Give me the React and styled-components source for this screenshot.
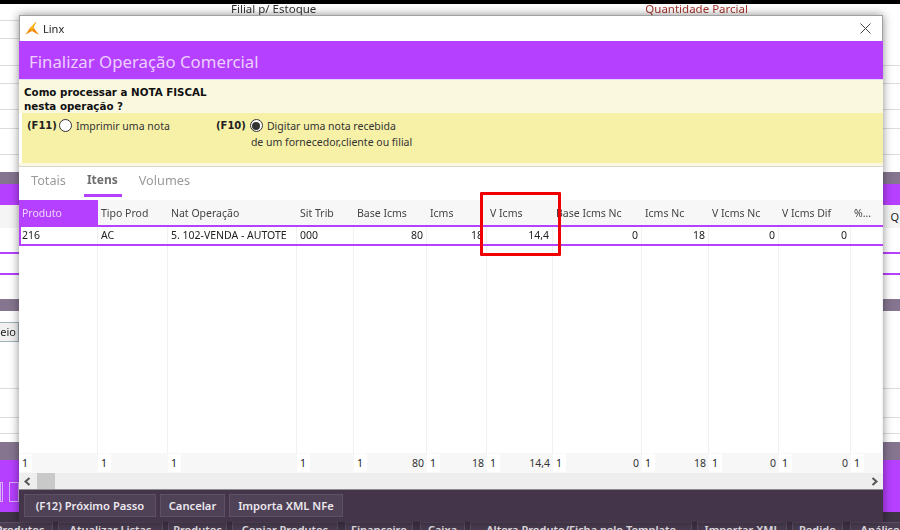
import styled, { createGlobalStyle } from "styled-components"

const GlobalStyle = createGlobalStyle`
    html, body {
        margin: 0;
        padding: 0;
        background: #fff;
    }
    body {
        width: 900px;
        height: 530px;
        overflow: hidden;
        font-family: "Noto Sans", "Liberation Sans", sans-serif;
    }
`

const PURPLE = "#b640ff"
const COLUMNS = "79px 70px 129px 57px 73px 60px 66px 89px 67px 70px 72px 1fr"

const Page = styled.div`
    position: relative;
    width: 900px;
    height: 530px;
    overflow: hidden;
    filter: blur(0.35px);
`

const Backdrop = styled.div`
    display: flex;
    flex-direction: column;
    height: 530px;
`

const BlackBar = styled.div`
    height: 4px;
    flex: none;
    background: #000;
`

const TopLabels = styled.div`
    height: 16px;
    flex: none;
    display: flex;
    font-size: 11.5px;
    line-height: 9px;
    overflow: hidden;
`

const TopLabel = styled.span`
    margin-left: ${(p) => p.$left}px;
    color: ${(p) => p.$color || "#333"};
`

const FormRow = styled.div`
    height: ${(p) => p.$h}px;
    flex: none;
    box-sizing: border-box;
    border-top: 1px solid #dcdcdc;
`

const ShortRow = styled(FormRow)`
    width: 20px;
`

const BlankRow = styled.div`
    height: ${(p) => p.$h}px;
    flex: none;
`

const GrayBand = styled.div`
    height: ${(p) => p.$h}px;
    flex: none;
    background: #85758f;
`

const PurpleBand = styled.div`
    height: ${(p) => p.$h}px;
    flex: none;
    background: ${PURPLE};
    display: flex;
    gap: 6px;
    padding-top: ${(p) => p.$pad || 0}px;
    box-sizing: border-box;
`

const GhostButton = styled.div`
    width: ${(p) => p.$w}px;
    height: 20px;
    flex: none;
    border: 1px solid #d8b0f5;
    box-sizing: border-box;
`

const LightRow = styled.div`
    height: 23px;
    flex: none;
    background: #f5f5f5;
    display: flex;
    justify-content: flex-end;
    align-items: center;
    padding-right: 1px;
    font-size: 11px;
    color: #222;
`

const PurpleLine = styled.div`
    height: ${(p) => p.$h}px;
    flex: none;
    box-sizing: border-box;
    border-top: 2px solid ${PURPLE};
`

const FieldRow = styled.div`
    height: 77px;
    flex: none;
    padding-top: 11px;
    box-sizing: border-box;
`

const Field = styled.div`
    width: 19px;
    height: 20px;
    box-sizing: border-box;
    border: 1px solid #9fb0bb;
    border-left: none;
    background: #f1f1f1;
    font-size: 11px;
    line-height: 18px;
    color: #222;
    text-align: right;
    padding-right: 2px;
    overflow: hidden;
`

const BottomTabs = styled.div`
    flex: 1;
    min-height: 0;
    background: #3f3346;
    display: flex;
    align-items: flex-start;
    padding-top: 10px;
    overflow: hidden;
`

const BottomTab = styled.div`
    flex: none;
    width: ${(p) => p.$w}px;
    margin-left: ${(p) => p.$left}px;
    box-sizing: border-box;
    text-align: center;
    font-size: 11px;
    font-weight: 600;
    line-height: 14px;
    white-space: nowrap;
    color: #e6e2e8;
    background: #4a3d51;
    border: 1px solid #5b4e62;
`

const Modal = styled.div`
    position: absolute;
    left: 19px;
    top: 15px;
    width: 864px;
    height: 507px;
    display: flex;
    flex-direction: column;
    background: #fff;
    box-shadow: 0 0 9px rgba(0, 0, 0, 0.45);
`

const TitleBar = styled.div`
    height: 26px;
    flex: none;
    box-sizing: border-box;
    border: 1px solid #a0a0a0;
    border-bottom: none;
    display: flex;
    align-items: center;
    padding: 0 11px 0 5px;
    gap: 3px;
    font-size: 11px;
    color: #222;
`

const WindowName = styled.span`
    flex: 1;
`

const HeaderBand = styled.div`
    height: 39px;
    flex: none;
    background: ${PURPLE};
    border-bottom: 1px solid #e8d8f4;
    display: flex;
    align-items: center;
    padding: 3px 0 0 10px;
    box-sizing: border-box;
    font-size: 16.8px;
    color: #eccfff;
`

const Question = styled.div`
    flex: none;
    height: 33px;
    box-sizing: border-box;
    background: #fbf8e0;
    padding: 5px 0 0 5px;
    font-family: "DejaVu Sans", sans-serif;
    font-size: 10.3px;
    line-height: 14px;
    font-weight: 700;
    color: #111;
`

const Options = styled.div`
    height: 50px;
    flex: none;
    background: #f7f1a8;
    margin-left: 3px;
    display: flex;
    padding-top: 5px;
    box-sizing: border-box;
    font-size: 10.5px;
    color: #333;
`

const Option = styled.div`
    width: ${(p) => p.$w}px;
    flex: none;
    display: flex;
    align-items: flex-start;
    padding-left: ${(p) => p.$pad}px;
    box-sizing: border-box;
`

const Shortcut = styled.span`
    font-family: "DejaVu Sans", sans-serif;
    font-size: 10px;
    font-weight: 700;
    color: #222;
    line-height: 15px;
`

const Radio = styled.span`
    width: 13px;
    height: 13px;
    flex: none;
    margin: 1px 4px 0 ${(p) => p.$gap}px;
    box-sizing: border-box;
    border-radius: 50%;
    border: 1px solid #333;
    background: #fff;
    display: flex;
    align-items: center;
    justify-content: center;

    &::after {
        content: "";
        width: 8px;
        height: 8px;
        border-radius: 50%;
        background: ${(p) => (p.$checked ? "#333" : "transparent")};
    }
`

const OptionText = styled.span`
    line-height: 16px;
`

const Indent = styled.span`
    display: block;
    margin-left: -16px;
`

const QuestionEnd = styled.div`
    height: 4px;
    flex: none;
    box-sizing: border-box;
    background: #fbf8e0;
    border-bottom: 1px solid #d6d6d6;
`

const Tabs = styled.div`
    height: 33px;
    flex: none;
    display: flex;
    gap: 21px;
    padding: 4px 0 0 12px;
    box-sizing: border-box;
    font-size: 12.7px;
    line-height: 18px;
    color: #9a9a9a;
`

const Tab = styled.div`
    position: relative;
    font-size: ${(p) => (p.$active ? "12px" : "12.7px")};
    font-weight: ${(p) => (p.$active ? 700 : 400)};
    color: ${(p) => (p.$active ? "#6e6e6e" : "#9a9a9a")};

    ${(p) =>
        p.$active &&
        `&::after {
            content: "";
            position: absolute;
            left: -3px;
            right: -4px;
            top: 23px;
            height: 3px;
            background: ${PURPLE};
        }`}
`

const GridRow = styled.div`
    display: grid;
    grid-template-columns: ${COLUMNS};
    flex: none;
`

const HeadRow = styled(GridRow)`
    height: 25px;
    background: #f7f7f7;
    font-size: 10.5px;
    color: #444;
`

const HeadCell = styled.div`
    display: flex;
    align-items: center;
    padding-left: 3px;
    white-space: nowrap;
    overflow: hidden;
    background: ${(p) => (p.$active ? PURPLE : "transparent")};
    color: ${(p) => (p.$active ? "#ecd6ff" : "#444")};
`

const SelectedRow = styled(GridRow)`
    height: 21px;
    box-sizing: border-box;
    border-top: 2px solid ${PURPLE};
    border-bottom: 2px solid ${PURPLE};
    box-shadow: inset 2px 0 0 ${PURPLE};
    font-size: 10.5px;
    color: #222;
`

const DataCell = styled.div`
    display: flex;
    align-items: center;
    justify-content: ${(p) => (p.$right ? "flex-end" : "flex-start")};
    padding: ${(p) => (p.$right ? "0 3px 1px 0" : "0 0 1px 3px")};
    border-right: 1px solid #f1f1f1;
    white-space: nowrap;
    overflow: hidden;
`

const EmptyRows = styled(GridRow)`
    flex: 1;
    min-height: 0;
`

const EmptyCell = styled.div`
    border-right: 1px solid #f1f1f1;
`

const TotalsRow = styled(GridRow)`
    height: 20px;
    background: #f7f7f7;
    font-size: 10.5px;
    color: #333;
`

const TotalCell = styled.div`
    display: flex;
    justify-content: space-between;
    align-items: center;
    padding-right: 3px;
    min-width: 0;
`

const CountChip = styled.span`
    background: #fff;
    padding: 2px 4px 2px 3px;
    line-height: 14px;
    color: #222;
`

const ScrollBar = styled.div`
    height: 17px;
    flex: none;
    box-sizing: border-box;
    background: #eeeeee;
    border-bottom: 1px solid #8c8c8c;
    display: flex;
    align-items: stretch;
    justify-content: space-between;
`

const ScrollLeft = styled.div`
    display: flex;
    align-items: center;
    gap: 6px;
    padding-left: 5px;
`

const Thumb = styled.div`
    width: 18px;
    align-self: stretch;
    background: #c9c9c9;
`

const ScrollRight = styled.div`
    display: flex;
    align-items: center;
    padding-right: 5px;
`

const Footer = styled.div`
    height: 32px;
    flex: none;
    box-sizing: border-box;
    background: #44354a;
    display: flex;
    gap: 4px;
    padding: 4px 0 0 5px;
    align-items: flex-start;
`

const FooterButton = styled.button`
    height: 23px;
    width: ${(p) => p.$w}px;
    padding: 0;
    background: #4f4257;
    border: 1px solid #5e5166;
    font-family: inherit;
    font-size: 11.2px;
    font-weight: 600;
    color: #ece8ee;
`

const Highlight = styled.div`
    position: absolute;
    left: 480px;
    top: 192px;
    width: 81px;
    height: 64px;
    box-sizing: border-box;
    border: 3px solid #f00000;
    border-radius: 1px;
`

const LinxLogo = () => (
    <svg width="15" height="15" viewBox="0 0 15 15">
        <path d="M11.5 0.5 L8.5 6.5 L14 14 L7 10 L0.5 13.5 L5 7 Z" fill="#f58a0b" />
        <path d="M11.5 0.5 L8.5 6.5 L7 10 L5 7 Z" fill="#f9b81f" />
    </svg>
)

const CloseIcon = () => (
    <svg width="11" height="11" viewBox="0 0 11 11">
        <path d="M0.5 0.5 L10.5 10.5 M10.5 0.5 L0.5 10.5" stroke="#444" strokeWidth="1" fill="none" />
    </svg>
)

const Chevron = ({ dir }) => (
    <svg width="7" height="9" viewBox="0 0 7 9">
        <path
            d={dir === "left" ? "M5.5 1 L1.5 4.5 L5.5 8" : "M1.5 1 L5.5 4.5 L1.5 8"}
            stroke="#555"
            strokeWidth="2"
            fill="none"
        />
    </svg>
)

const headers = [
    "Produto",
    "Tipo Prod",
    "Nat Operação",
    "Sit Trib",
    "Base Icms",
    "Icms",
    "V Icms",
    "Base Icms Nc",
    "Icms Nc",
    "V Icms Nc",
    "V Icms Dif",
    "%...",
]

const rowCells = [
    { text: "216" },
    { text: "AC" },
    { text: "5. 102-VENDA - AUTOTE" },
    { text: "000" },
    { text: "80", right: true },
    { text: "18", right: true },
    { text: "14,4", right: true },
    { text: "0", right: true },
    { text: "18", right: true },
    { text: "0", right: true },
    { text: "0", right: true },
    { text: "" },
]

const totals = ["", "", "", "", "80", "18", "14,4", "0", "18", "0", "0", ""]

// width and gap before each tab of the strip under the dialog
const tabs = [
    ["Produtos", 66, -13],
    ["Atualizar Listas", 105, 5],
    ["Produtos", 59, 5],
    ["Copiar Produtos", 106, 5],
    ["Financeiro", 68, 7],
    ["Caixa", 45, 7],
    ["Altera Produto/Ficha pelo Template", 222, 5],
    ["Importar XML", 90, 5],
    ["Pedido", 51, 5],
    ["Análise", 60, 7],
]

export default function App() {
    return (
        <Page>
            <GlobalStyle />
            <Backdrop>
                <BlackBar />
                <TopLabels>
                    <TopLabel $left={231}>Filial p/ Estoque</TopLabel>
                    <TopLabel $left={329} $color="#a5342c">
                        Quantidade Parcial
                    </TopLabel>
                </TopLabels>
                <ShortRow $h={18} />
                <ShortRow $h={27} />
                <FormRow $h={18} />
                <FormRow $h={26} />
                <FormRow $h={19} />
                <FormRow $h={26} />
                <FormRow $h={18} />
                <GrayBand $h={12} />
                <PurpleBand $h={21} />
                <LightRow>Q</LightRow>
                <BlankRow $h={24} />
                <PurpleLine $h={21} />
                <PurpleLine $h={26} />
                <GrayBand $h={12} />
                <FieldRow>
                    <Field>eio</Field>
                </FieldRow>
                <FormRow $h={29} />
                <FormRow $h={16} />
                <FormRow $h={9} />
                <GrayBand $h={18} />
                <PurpleBand $h={52} $pad={22}>
                    <GhostButton $w={3} />
                    <GhostButton $w={10} />
                </PurpleBand>
                <BottomTabs>
                    {tabs.map(([name, w, left], i) => (
                        <BottomTab key={i} $w={w} $left={left}>
                            {name}
                        </BottomTab>
                    ))}
                </BottomTabs>
            </Backdrop>

            <Modal>
                <TitleBar>
                    <LinxLogo />
                    <WindowName>Linx</WindowName>
                    <CloseIcon />
                </TitleBar>
                <HeaderBand>Finalizar Operação Comercial</HeaderBand>
                <Question>
                    Como processar a NOTA FISCAL
                    <br />
                    nesta operação ?
                </Question>
                <Options>
                    <Option $w={194} $pad={5}>
                        <Shortcut>(F11)</Shortcut>
                        <Radio $gap={2} />
                        <OptionText>Imprimir uma nota</OptionText>
                    </Option>
                    <Option $w={400} $pad={0}>
                        <Shortcut>(F10)</Shortcut>
                        <Radio $gap={4} $checked />
                        <OptionText>
                            Digitar uma nota recebida
                            <Indent>de um fornecedor,cliente ou filial</Indent>
                        </OptionText>
                    </Option>
                </Options>
                <QuestionEnd />
                <Tabs>
                    <Tab>Totais</Tab>
                    <Tab $active>Itens</Tab>
                    <Tab>Volumes</Tab>
                </Tabs>
                <HeadRow>
                    {headers.map((h, i) => (
                        <HeadCell key={h} $active={i === 0}>
                            {h}
                        </HeadCell>
                    ))}
                </HeadRow>
                <SelectedRow>
                    {rowCells.map((c, i) => (
                        <DataCell key={i} $right={c.right}>
                            {c.text}
                        </DataCell>
                    ))}
                </SelectedRow>
                <EmptyRows>
                    {headers.map((h) => (
                        <EmptyCell key={h} />
                    ))}
                </EmptyRows>
                <TotalsRow>
                    {totals.map((v, i) => (
                        <TotalCell key={i}>
                            <CountChip>1</CountChip>
                            {v}
                        </TotalCell>
                    ))}
                </TotalsRow>
                <ScrollBar>
                    <ScrollLeft>
                        <Chevron dir="left" />
                        <Thumb />
                    </ScrollLeft>
                    <ScrollRight>
                        <Chevron dir="right" />
                    </ScrollRight>
                </ScrollBar>
                <Footer>
                    <FooterButton $w={132}>(F12) Próximo Passo</FooterButton>
                    <FooterButton $w={65}>Cancelar</FooterButton>
                    <FooterButton $w={114}>Importa XML NFe</FooterButton>
                </Footer>
            </Modal>
            <Highlight />
        </Page>
    )
}
